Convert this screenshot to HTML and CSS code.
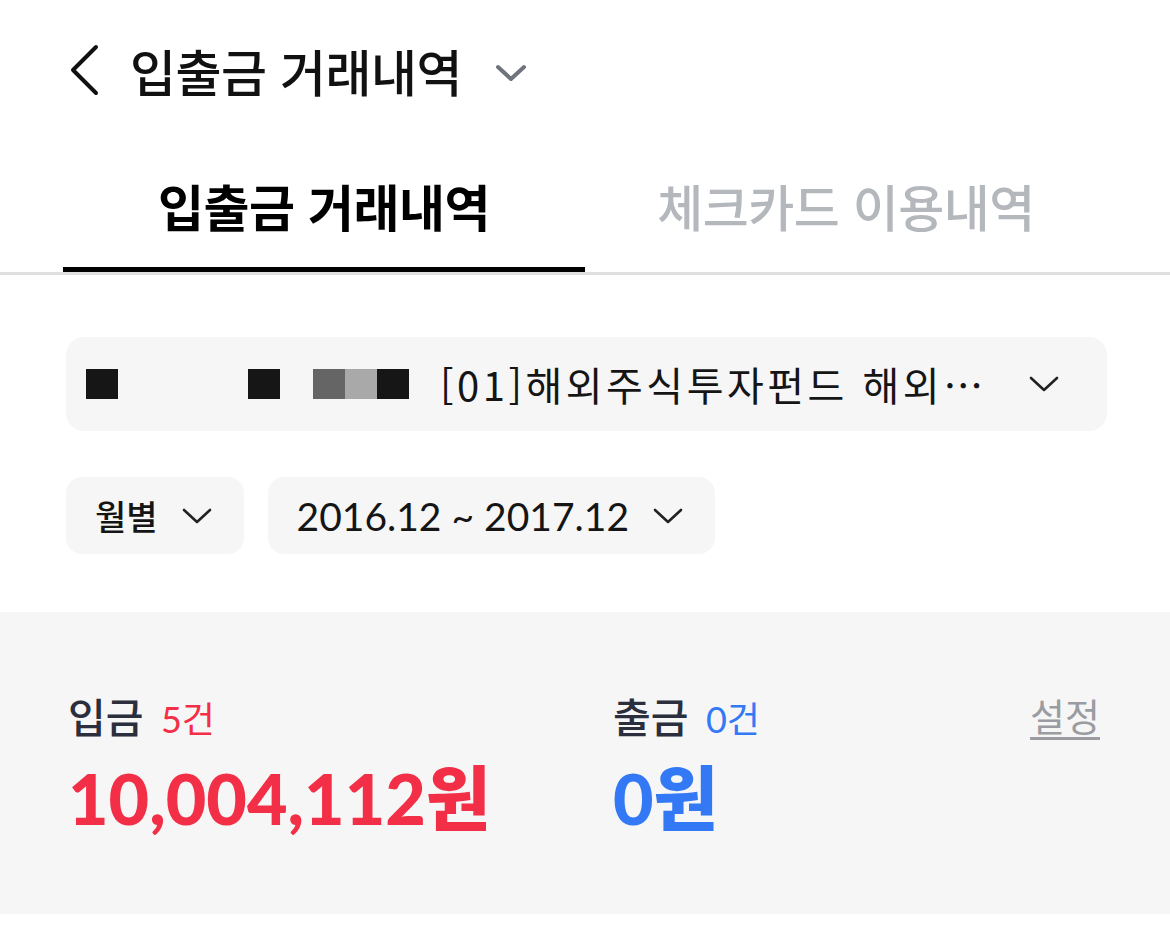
FILE: index.html
```html
<!DOCTYPE html>
<html lang="ko">
<head>
    <meta charset="UTF-8">
    <meta name="viewport" content="width=device-width, initial-scale=1.0">
    <title>입출금 거래내역</title>
    <link rel="stylesheet" href="styles.css">
</head>
<body>
    <header class="top-bar">
        <button class="back-btn" aria-label="뒤로">
            <svg width="32" height="52" viewBox="0 0 32 52"><path d="M28 3 L5 26 L28 49" fill="none" stroke="#111" stroke-width="4" stroke-linecap="round" stroke-linejoin="round"/></svg>
        </button>
        <h1 class="page-title">입출금 거래내역</h1>
        <svg class="title-chevron" width="32" height="20" viewBox="0 0 32 20"><path d="M3 4 L16 16 L29 4" fill="none" stroke="#6e737c" stroke-width="4" stroke-linecap="round" stroke-linejoin="round"/></svg>
    </header>

    <nav class="tabs">
        <div class="tab active">입출금 거래내역</div>
        <div class="tab">체크카드 이용내역</div>
    </nav>

    <section class="filters">
        <div class="account-select">
            <div class="masked">
                <span class="sq black"></span>
                <span class="sq black gap-big"></span>
                <span class="sq dark gap-small"></span>
                <span class="sq light"></span>
                <span class="sq black"></span>
            </div>
            <span class="account-name">[01]해외주식투자펀드 해외…</span>
            <svg class="chev" width="30" height="18" viewBox="0 0 30 18"><path d="M2 3 L15 15 L28 3" fill="none" stroke="#222" stroke-width="2.6" stroke-linecap="round" stroke-linejoin="round"/></svg>
        </div>

        <div class="filter-row">
            <div class="chip">
                <span class="chip-label ko">월별</span>
                <svg class="chev" width="30" height="18" viewBox="0 0 30 18"><path d="M2 3 L15 15 L28 3" fill="none" stroke="#222" stroke-width="2.6" stroke-linecap="round" stroke-linejoin="round"/></svg>
            </div>
            <div class="chip">
                <span class="chip-label">2016.12 ~ 2017.12</span>
                <svg class="chev" width="30" height="18" viewBox="0 0 30 18"><path d="M2 3 L15 15 L28 3" fill="none" stroke="#222" stroke-width="2.6" stroke-linecap="round" stroke-linejoin="round"/></svg>
            </div>
        </div>
    </section>

    <section class="summary">
        <div class="sum-col deposit">
            <div class="sum-label">입금 <span class="count">5건</span></div>
            <div class="sum-amount">10,004,112원</div>
        </div>
        <div class="sum-col withdraw">
            <div class="sum-label">출금 <span class="count">0건</span></div>
            <div class="sum-amount">0원</div>
        </div>
        <a class="settings" href="#">설정</a>
    </section>
</body>
</html>
```

FILE: styles.css
```css
* {
    box-sizing: border-box;
}
body {
    margin: 0;
    background-color: #ffffff;
    color: #111111;
    font-family: "Lato", "Noto Sans CJK KR", sans-serif;
}
.top-bar {
    height: 140px;
    display: flex;
    align-items: center;
    padding: 0 0 0 68px;
}
.back-btn {
    border: none;
    background: none;
    padding: 0;
    margin: 0 30px 0 0;
    display: flex;
}
.page-title {
    margin: 0;
    font-family: "Noto Sans CJK KR", sans-serif;
    font-size: 50px;
    font-weight: 500;
    color: #111;
    letter-spacing: -0.5px;
}
.title-chevron {
    margin-left: 33px;
    margin-top: 6px;
}
.tabs {
    display: flex;
    padding: 0 63px;
    border-bottom: 3px solid #dedfe1;
}
.tab {
    flex: 1;
    text-align: center;
    font-family: "Noto Sans CJK KR", sans-serif;
    font-size: 50px;
    font-weight: 500;
    color: #b4b7bc;
    height: 132px;
    line-height: 130px;
    position: relative;
    letter-spacing: -0.5px;
}
.tab.active {
    color: #000;
    font-weight: 700;
}
.tab.active::after {
    content: "";
    position: absolute;
    left: 0;
    right: 0;
    bottom: 0;
    height: 5px;
    background: #000;
}
.filters {
    padding: 62px 63px 58px 66px;
}
.account-select {
    height: 94px;
    background: #f6f6f7;
    border-radius: 18px;
    display: flex;
    align-items: center;
    padding: 0 48px 0 20px;
}
.masked {
    display: flex;
}
.sq {
    width: 32px;
    height: 30px;
}
.sq.black {
    background: #161616;
}
.sq.dark {
    background: #656565;
}
.sq.light {
    background: #a9a9a9;
}
.gap-big {
    margin-left: 130px;
}
.gap-small {
    margin-left: 33px;
}
.account-name {
    margin-left: 31px;
    flex: 1;
    font-family: "Noto Sans CJK KR", sans-serif;
    font-size: 40px;
    color: #151515;
    letter-spacing: 3.5px;
}
.filter-row {
    display: flex;
    gap: 24px;
    margin-top: 46px;
}
.chip {
    height: 77px;
    background: #f6f6f7;
    border-radius: 16px;
    display: flex;
    align-items: center;
    padding: 0 32px 0 29px;
    gap: 24px;
}
.chip-label {
    font-size: 39px;
    color: #151515;
}
.chip-label.ko {
    font-family: "Noto Sans CJK KR", sans-serif;
    font-size: 34px;
    font-weight: 500;
}
.summary {
    background: #f6f6f6;
    height: 302px;
    display: flex;
    padding: 76px 70px 0 68px;
}
.sum-col.deposit {
    width: 545px;
}
.sum-col.withdraw {
    flex: 1;
}
.sum-label {
    font-family: "Noto Sans CJK KR", sans-serif;
    font-size: 41px;
    font-weight: 500;
    color: #2b2f3d;
    line-height: 54px;
}
.count {
    font-family: "Lato", "Noto Sans CJK KR", sans-serif;
    font-size: 36px;
    font-weight: 400;
    margin-left: 6px;
}
.deposit .count,
.deposit .sum-amount {
    color: #f22f46;
}
.withdraw .count,
.withdraw .sum-amount {
    color: #3379f5;
}
.sum-amount {
    font-size: 70px;
    font-weight: 900;
    line-height: 80px;
    margin-top: 12px;
}
.settings {
    font-family: "Noto Sans CJK KR", sans-serif;
    font-size: 38px;
    color: #9a9ca1;
    text-decoration: underline;
    text-underline-offset: 6px;
    line-height: 54px;
}
```
